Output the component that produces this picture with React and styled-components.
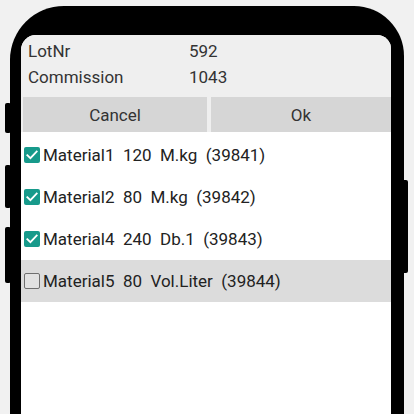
import React from "react";
import styled, { createGlobalStyle } from "styled-components";

const Global = createGlobalStyle`
  html, body { margin: 0; padding: 0; background: #f1f1f1; }
  body { font-family: Roboto, "Noto Sans", "Liberation Sans", sans-serif; overflow: hidden; }
  #root { width: 414px; height: 414px; overflow: hidden; }
`;

const Stage = styled.div`
  width: 414px;
  height: 414px;
  overflow: hidden;
  padding: 6px 0 0 10px;
  box-sizing: border-box;
`;

const Phone = styled.div`
  position: relative;
  width: 394px;
  height: 460px;
  box-sizing: border-box;
  background: #000;
  border-radius: 54px 50px 0 0;
  padding: 29px 13px 0 11px;
`;

const SideButton = styled.div`
  position: absolute;
  background: #000;
  width: 6px;
  border-radius: 2px;
  ${(p) => (p.$side === "left" ? "left: -5px;" : "right: -4px;")}
  top: ${(p) => p.$top}px;
  height: ${(p) => p.$h}px;
`;

const Screen = styled.div`
  width: 370px;
  height: 100%;
  background: #fff;
  border-radius: 15px 14px 0 0;
  overflow: hidden;
`;

const Header = styled.div`
  background: #efefef;
  padding: 3px 0 0 2px;
`;

const InfoRow = styled.div`
  display: grid;
  grid-template-columns: 161px 1fr;
  height: 26px;
  align-items: center;
  padding-left: 5px;
  font-size: 17px;
  color: #333;
`;

const Buttons = styled.div`
  display: grid;
  grid-template-columns: 184px 1fr;
  gap: 4px;
  margin-top: 7px;
`;

const Btn = styled.div`
  height: 35px;
  background: #d6d6d6;
  display: flex;
  align-items: center;
  justify-content: center;
  font-size: 17px;
  color: #333;
`;

const List = styled.div`
  padding-top: 2px;
`;

const Item = styled.div`
  height: 42px;
  display: flex;
  align-items: center;
  padding-left: 3px;
  gap: 3px;
  background: ${(p) => (p.$checked ? "#fff" : "#dcdcdc")};
`;

const Box = styled.div`
  width: 16px;
  height: 16px;
  box-sizing: border-box;
  border-radius: 2px;
  background: ${(p) => (p.$checked ? "#179a8b" : "#e2e2e2")};
  border: ${(p) => (p.$checked ? "none" : "1.6px solid #6f6f6f")};
  display: flex;
  align-items: center;
  justify-content: center;
`;

const Label = styled.span`
  font-size: 17px;
  color: #222;
  white-space: pre;
`;

const items = [
  { text: "Material1  120  M.kg  (39841)", checked: true },
  { text: "Material2  80  M.kg  (39842)", checked: true },
  { text: "Material4  240  Db.1  (39843)", checked: true },
  { text: "Material5  80  Vol.Liter  (39844)", checked: false },
];

export default function App() {
  return (
    <>
      <Global />
      <Stage>
        <Phone>
          <SideButton $side="left" $top={97} $h={30} />
          <SideButton $side="left" $top={159} $h={43} />
          <SideButton $side="left" $top={221} $h={56} />
          <SideButton $side="right" $top={174} $h={93} />
          <Screen>
            <Header>
              <InfoRow>
                <span>LotNr</span>
                <span>592</span>
              </InfoRow>
              <InfoRow>
                <span>Commission</span>
                <span>1043</span>
              </InfoRow>
              <Buttons>
                <Btn>Cancel</Btn>
                <Btn>Ok</Btn>
              </Buttons>
            </Header>
            <List>
              {items.map((it) => (
                <Item key={it.text} $checked={it.checked}>
                  <Box $checked={it.checked}>
                    {it.checked && (
                      <svg width="12" height="10" viewBox="0 0 12 10">
                        <path d="M1.3 5.2 L4.4 8.2 L10.7 1.6" fill="none" stroke="#fff" strokeWidth="1.8" strokeLinecap="square" />
                      </svg>
                    )}
                  </Box>
                  <Label>{it.text}</Label>
                </Item>
              ))}
            </List>
          </Screen>
        </Phone>
      </Stage>
    </>
  );
}
